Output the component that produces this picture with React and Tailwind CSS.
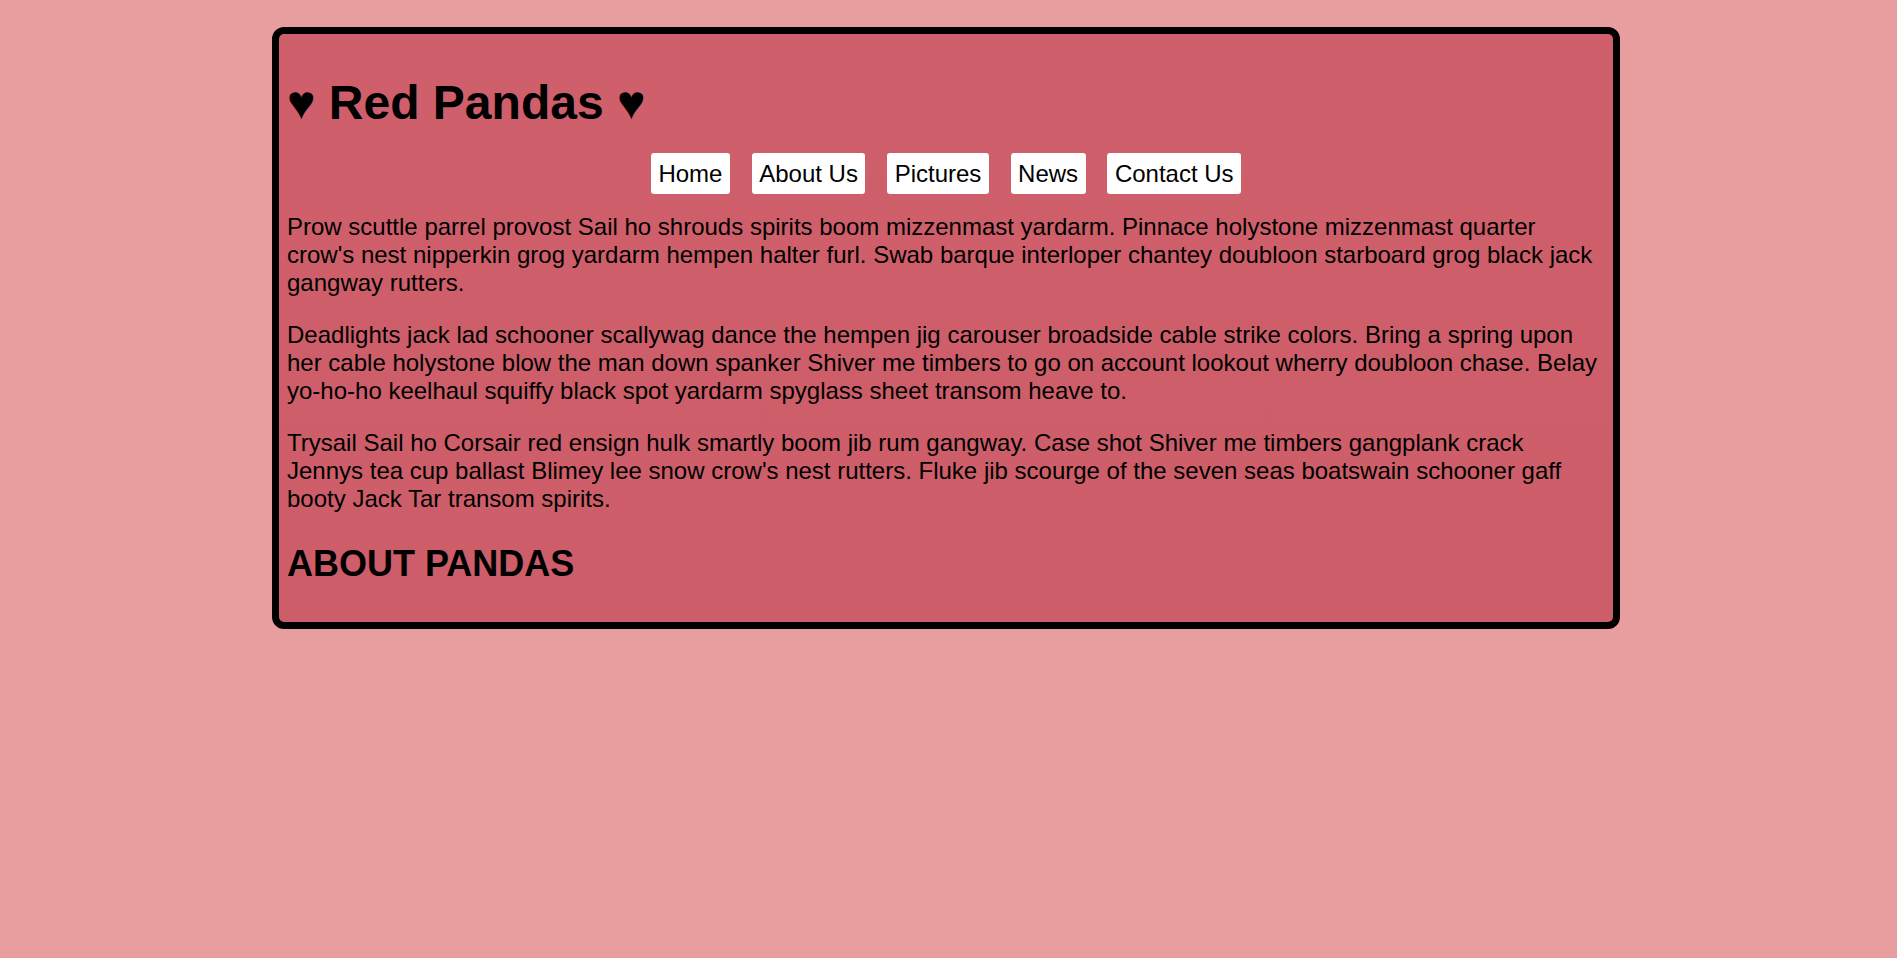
import React from 'react';

const links = ['Home', 'About Us', 'Pictures', 'News', 'Contact Us'];

const paragraphs = [
  "Prow scuttle parrel provost Sail ho shrouds spirits boom mizzenmast yardarm. Pinnace holystone mizzenmast quarter crow's nest nipperkin grog yardarm hempen halter furl. Swab barque interloper chantey doubloon starboard grog black jack gangway rutters.",
  "Deadlights jack lad schooner scallywag dance the hempen jig carouser broadside cable strike colors. Bring a spring upon her cable holystone blow the man down spanker Shiver me timbers to go on account lookout wherry doubloon chase. Belay yo-ho-ho keelhaul squiffy black spot yardarm spyglass sheet transom heave to.",
  "Trysail Sail ho Corsair red ensign hulk smartly boom jib rum gangway. Case shot Shiver me timbers gangplank crack Jennys tea cup ballast Blimey lee snow crow's nest rutters. Fluke jib scourge of the seven seas boatswain schooner gaff booty Jack Tar transom spirits."
];

export default function App() {
  return (
    <div className="min-h-screen bg-[#E89E9F] pt-[27px] font-['Liberation_Sans',Arial,sans-serif] text-black">
      <div className="ml-[272px] w-[1348px] border-[7px] border-black rounded-[12px] bg-gradient-to-b from-[#CF606B] to-[#CC5D69] px-[8px] pt-[8px] pb-[37px]">
        <h1 className="mt-[33px] text-[48px] leading-[55px] font-bold">♥ Red Pandas ♥</h1>

        {/* menu */}
        <nav className="mt-[23px] flex justify-center gap-[21.75px]">
          {links.map(l => (
            <a key={l} href="#" className="bg-white rounded-[3px] px-[7.5px] py-[7px] text-[24px] leading-[27px] text-black">
              {l}
            </a>
          ))}
        </nav>

        <div className="mt-[18.5px] flex flex-col gap-[24px]">
          {paragraphs.map((p, i) => (
            <p key={i} className="text-[24px] leading-[28px]">{p}</p>
          ))}
        </div>

        <h2 className="mt-[30px] text-[36px] leading-[42px] font-bold">ABOUT PANDAS</h2>
      </div>
    </div>
  );
}
